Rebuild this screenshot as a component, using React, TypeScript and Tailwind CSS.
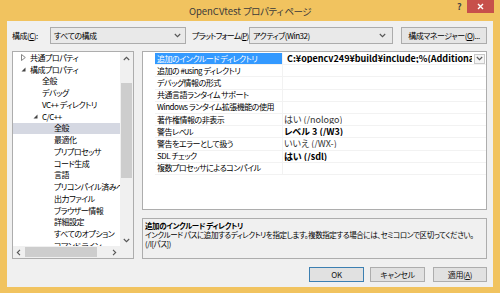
import React from "react";

type Node = { t: string; lvl: number; icon?: "open" | "closed"; sel?: boolean };

const tree: Node[] = [
  { t: "共通プロパティ", lvl: 0, icon: "closed" },
  { t: "構成プロパティ", lvl: 0, icon: "open" },
  { t: "全般", lvl: 1 },
  { t: "デバッグ", lvl: 1 },
  { t: "VC++ ディレクトリ", lvl: 1 },
  { t: "C/C++", lvl: 1, icon: "open" },
  { t: "全般", lvl: 2, sel: true },
  { t: "最適化", lvl: 2 },
  { t: "プリプロセッサ", lvl: 2 },
  { t: "コード生成", lvl: 2 },
  { t: "言語", lvl: 2 },
  { t: "プリコンパイル済みヘッダー", lvl: 2 },
  { t: "出力ファイル", lvl: 2 },
  { t: "ブラウザー情報", lvl: 2 },
  { t: "詳細設定", lvl: 2 },
  { t: "すべてのオプション", lvl: 2 },
  { t: "コマンド ライン", lvl: 2 },
];

type Prop = { n: string; v?: string; bold?: boolean; sel?: boolean };
const props: Prop[] = [
  { n: "追加のインクルード ディレクトリ", v: "C:¥opencv249¥build¥include;%(AdditionalIncludeDirectories)", bold: true, sel: true },
  { n: "追加の #using ディレクトリ" },
  { n: "デバッグ情報の形式" },
  { n: "共通言語ランタイム サポート" },
  { n: "Windows ランタイム拡張機能の使用" },
  { n: "著作権情報の非表示", v: "はい (/nologo)" },
  { n: "警告レベル", v: "レベル 3 (/W3)", bold: true },
  { n: "警告をエラーとして扱う", v: "いいえ (/WX-)" },
  { n: "SDL チェック", v: "はい (/sdl)", bold: true },
  { n: "複数プロセッサによるコンパイル" },
];

function Chevron({ className = "" }: { className?: string }) {
  return (
    <svg width="7" height="5" viewBox="0 0 7 5" className={className}>
      <path d="M0.8 1 L3.5 3.7 L6.2 1" fill="none" stroke="#555" strokeWidth="1.1" />
    </svg>
  );
}

function TreeIcon({ kind }: { kind: "open" | "closed" }) {
  if (kind === "closed")
    return (
      <svg width="5" height="7" viewBox="0 0 5 7">
        <path d="M0.5 0.5 L4.3 3.5 L0.5 6.5 Z" fill="none" stroke="#777" strokeWidth="0.9" />
      </svg>
    );
  return (
    <svg width="5" height="5" viewBox="0 0 5 5">
      <path d="M4.5 0.5 L4.5 4.5 L0.5 4.5 Z" fill="#444" />
    </svg>
  );
}

function Btn({ children, primary = false, w }: { children: React.ReactNode; primary?: boolean; w: string }) {
  return (
    <div
      className={`${w} h-[15px] flex items-center justify-center border ${
        primary ? "border-[#3c7fb1]" : "border-[#adadad]"
      } bg-[#e1e1e1] text-[8px] tracking-[-0.4px] text-[#111] leading-none whitespace-nowrap`}
    >
      {children}
    </div>
  );
}

export default function App() {
  return (
    <div className="w-[500px] h-[293px] bg-[#f1c35f] flex flex-col overflow-hidden font-['Noto_Sans_CJK_JP',sans-serif] [font-feature-settings:'palt'] text-black">
      {/* Title bar */}
      <div className="h-[21px] relative flex items-center justify-center shrink-0">
        <span className="text-[#3a3a3a] leading-none mt-[2px] whitespace-nowrap text-[9.5px]">
          <span>OpenCVtest </span>
          <span className="tracking-[-0.5px]">プロパティ ページ</span>
        </span>
        <span className="absolute left-[457px] top-[2px] text-[9px] font-bold text-[#444] leading-none">?</span>
        <div className="absolute left-[467px] top-0 w-[27px] h-[13px] bg-[#c7504b] flex items-center justify-center">
          <svg width="7" height="7" viewBox="0 0 7 7">
            <path d="M1 1 L6 6 M6 1 L1 6" stroke="#fff" strokeWidth="1.4" />
          </svg>
        </div>
      </div>

      {/* Body */}
      <div className="mx-[7px] mb-[6px] flex-1 min-h-0 bg-[#f0f0f0] flex flex-col pl-[5px] pr-[6px] pt-[6px]">
        {/* toolbar */}
        <div className="h-[17px] flex items-center text-[8px] tracking-[-0.5px] leading-none shrink-0 whitespace-nowrap">
          <span className="w-[38px] shrink-0">
            構成(<span className="underline">C</span>):
          </span>
          <div className="w-[136px] shrink-0 h-[17px] border border-[#acacac] bg-[#e9e9e9] flex items-center justify-between pl-[3px] pr-[4px]">
            <span>すべての構成</span>
            <Chevron />
          </div>
          <span className="w-[57px] shrink-0 ml-[6px] tracking-[-0.8px]">
            プラットフォーム(<span className="underline">P</span>):
          </span>
          <div className="w-[144px] shrink-0 h-[17px] border border-[#acacac] bg-[#e9e9e9] flex items-center justify-between pl-[3px] pr-[6px]">
            <span>アクティブ(Win32)</span>
            <Chevron />
          </div>
          <div className="ml-[8px] w-[86px] shrink-0 h-[17px] border border-[#acacac] bg-[#e5e5e5] flex items-center justify-center">
            構成マネージャー(<span className="underline">O</span>)...
          </div>
        </div>

        {/* main */}
        <div className="mt-[7px] flex h-[208px] shrink-0 min-w-0">
          {/* tree */}
          <div className="w-[122px] h-[208px] border border-[#adadad] bg-white flex flex-col shrink-0">
            <div className="flex h-[194px]">
              <div className="w-[107px] overflow-hidden text-[8px] tracking-[-0.5px] leading-none">
                {tree.map((n, i) => (
                  <div
                    key={i}
                    className={`h-[11.75px] flex items-center relative whitespace-nowrap ${n.sel ? "bg-[#d5d8e2]" : ""}`}
                  >
                    {n.icon && (
                      <span
                        className={`absolute flex items-center ${
                          n.lvl === 0 ? "left-[8px]" : "left-[20px]"
                        }`}
                      >
                        <TreeIcon kind={n.icon} />
                      </span>
                    )}
                    <span className={n.lvl === 0 ? "ml-[17px]" : n.lvl === 1 ? "ml-[29px]" : "ml-[41px]"}>{n.t}</span>
                  </div>
                ))}
              </div>
              {/* vertical scrollbar */}
              <div className="w-[13px] bg-[#f0f0f0] flex flex-col items-center">
                <div className="h-[12px] flex items-center justify-center">
                  <Chevron className="rotate-180" />
                </div>
                <div className="w-[11px] h-[95px] mt-[19px] bg-[#cdcdcd]" />
                <div className="flex-1" />
                <div className="h-[12px] flex items-center justify-center">
                  <Chevron />
                </div>
              </div>
            </div>
            {/* horizontal scrollbar */}
            <div className="flex h-[12px]">
              <div className="w-[107px] bg-[#f0f0f0] flex items-center">
                <div className="w-[11px] flex justify-center">
                  <Chevron className="rotate-90" />
                </div>
                <div className="ml-[1px] w-[72px] h-[10px] bg-[#cdcdcd]" />
                <div className="flex-1" />
                <div className="w-[11px] flex justify-center">
                  <Chevron className="-rotate-90" />
                </div>
              </div>
              <div className="w-[13px] bg-[#f0f0f0]" />
            </div>
          </div>

          {/* right column */}
          <div className="ml-[8px] flex-1 min-w-0 flex flex-col">
            {/* property grid */}
            <div className="h-[159px] border border-[#adadad] bg-white pl-[12px] pt-[1px] overflow-hidden">
              {props.map((p, i) => (
                <div key={i} className="h-[12.2px] flex border-b border-[#f2f2f2] leading-none">
                  <div
                    className={`w-[128px] shrink-0 flex items-center pl-[2px] border-r border-[#f2f2f2] whitespace-nowrap text-[8px] tracking-[-0.5px] ${
                      p.sel ? "bg-[#3399ff] text-white" : ""
                    }`}
                  >
                    {p.n}
                  </div>
                  <div className="flex-1 flex items-center min-w-0 overflow-hidden">
                    {p.v && (
                      <span
                        className={`min-w-0 whitespace-nowrap overflow-hidden text-[9px] ${p.sel ? "pl-[4px] flex-1" : "pl-[1px]"} ${
                          p.bold ? "font-bold text-black" : "text-[#333]"
                        }`}
                      >
                        {p.v}
                      </span>
                    )}
                    {p.sel && (
                      <div className="shrink-0 mr-[1px] ml-[2px] w-[11px] h-[10px] border border-[#c9c9c9] bg-[#f4f4f4] flex items-center justify-center">
                        <Chevron />
                      </div>
                    )}
                  </div>
                </div>
              ))}
            </div>
            {/* description */}
            <div className="mt-[8px] flex-1 min-w-0 overflow-hidden border border-[#adadad] bg-[#f0f0f0] pl-[2px] pt-[2px] text-[7.5px] tracking-[-0.4px] leading-[9px] whitespace-nowrap">
              <div className="font-bold">追加のインクルード ディレクトリ</div>
              <div>
                インクルード パスに追加するディレクトリを指定します。複数指定する場合には、セミコロンで区切ってください。
              </div>
              <div>(/I[パス])</div>
            </div>
          </div>
        </div>

        {/* buttons */}
        <div className="mt-[8px] flex justify-end gap-[6px]">
          <Btn primary w="w-[55px]">OK</Btn>
          <Btn w="w-[55px]">キャンセル</Btn>
          <div className="ml-[2px]">
            <Btn w="w-[54px]">
              適用(<span className="underline">A</span>)
            </Btn>
          </div>
        </div>
      </div>
    </div>
  );
}
